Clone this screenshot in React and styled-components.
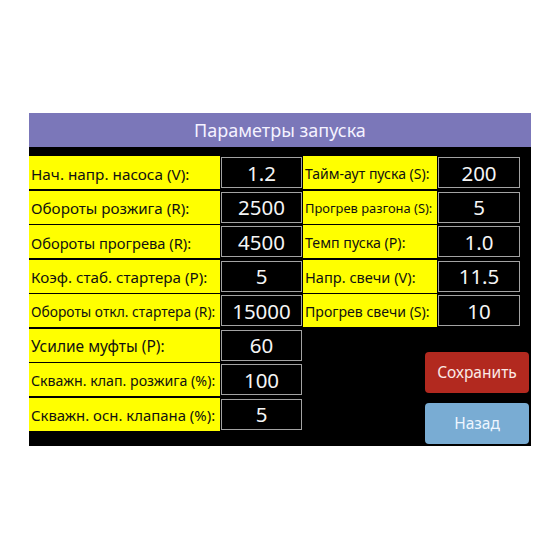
import React from 'react';
import styled, { createGlobalStyle } from 'styled-components';

const GlobalStyle = createGlobalStyle`
  html, body {
    margin: 0;
    padding: 0;
    background: #ffffff;
    font-family: "Noto Sans", "Open Sans", sans-serif;
  }
`;

// Страница целиком
const Page = styled.div`
  width: 560px;
  height: 560px;
  padding: 113px 0 0 29px;
  box-sizing: border-box;
`;

const Panel = styled.div`
  width: 502px;
  background: #000;
  display: flex;
  flex-direction: column;
`;

const Header = styled.div`
  height: 34px;
  background: #7b77b9;
  color: #f4f2ff;
  font-size: 18px;
  display: flex;
  align-items: center;
  justify-content: center;
`;

const Body = styled.div`
  display: grid;
  grid-template-columns: 191px 83px 134px 84px 10px;
  grid-template-rows: repeat(8, 33px);
  row-gap: 1.5px;
  padding: 9px 0 15px 0;
`;

const Label = styled.div`
  background: #ffff00;
  color: #111;
  font-size: ${(p) => p.size || 14}px;
  display: flex;
  align-items: center;
  padding: 2px 0 0 2px;
  white-space: nowrap;
  overflow: hidden;
  box-sizing: border-box;
`;

const Cell = styled.div`
  padding: 1px;
  box-sizing: border-box;
  display: flex;
`;

const Value = styled.div`
  flex: 1;
  background: #000;
  border: 1.5px solid #a3a3a3;
  color: #f5f5f5;
  font-size: 20.5px;
  display: flex;
  align-items: center;
  justify-content: center;
`;

const Buttons = styled.div`
  grid-column: 3 / 6;
  grid-row: 6 / 9;
  display: flex;
  flex-direction: column;
  align-items: flex-end;
  gap: 10px;
  padding: 23px 2px 0 0;
`;

const Button = styled.button`
  width: 104px;
  height: 41px;
  border: none;
  border-radius: 4px;
  background: ${(p) => p.bg};
  color: ${(p) => p.fg};
  font-family: "Noto Sans", "Open Sans", sans-serif;
  font-size: 15.5px;
  cursor: pointer;
  flex-shrink: 0;
`;

const left = [
  { label: 'Нач. напр. насоса (V):', value: '1.2', size: 15.3 },
  { label: 'Обороты розжига (R):', value: '2500', size: 15.2 },
  { label: 'Обороты прогрева (R):', value: '4500', size: 14.7 },
  { label: 'Коэф. стаб. стартера (P):', value: '5', size: 15.2 },
  { label: 'Обороты откл. стартера (R):', value: '15000', size: 13.8 },
  { label: 'Усилие муфты (P):', value: '60', size: 15.5 },
  { label: 'Скважн. клап. розжига (%):', value: '100', size: 14.2 },
  { label: 'Скважн. осн. клапана (%):', value: '5', size: 14.9 },
];

const right = [
  { label: 'Тайм-аут пуска (S):', value: '200', size: 14 },
  { label: 'Прогрев разгона (S):', value: '5', size: 12.9 },
  { label: 'Темп пуска (P):', value: '1.0', size: 14.2 },
  { label: 'Напр. свечи (V):', value: '11.5', size: 14.6 },
  { label: 'Прогрев свечи (S):', value: '10', size: 14.1 },
];

const Field = ({ item, row, col }) => (
  <>
    <Label size={item.size} style={{ gridRow: row, gridColumn: col }}>
      {item.label}
    </Label>
    <Cell style={{ gridRow: row, gridColumn: col + 1 }}>
      <Value>{item.value}</Value>
    </Cell>
  </>
);

const App = () => {
  return (
    <Page>
      <GlobalStyle />
      <Panel>
        <Header>Параметры запуска</Header>
        <Body>
          {left.map((item, i) => (
            <Field key={'l' + i} item={item} row={i + 1} col={1} />
          ))}
          {right.map((item, i) => (
            <Field key={'r' + i} item={item} row={i + 1} col={3} />
          ))}
          <Buttons>
            <Button bg="#b2291f" fg="#fbe9e6">Сохранить</Button>
            <Button bg="#79acd3" fg="#eef6ff">Назад</Button>
          </Buttons>
        </Body>
      </Panel>
    </Page>
  );
};

export default App;
